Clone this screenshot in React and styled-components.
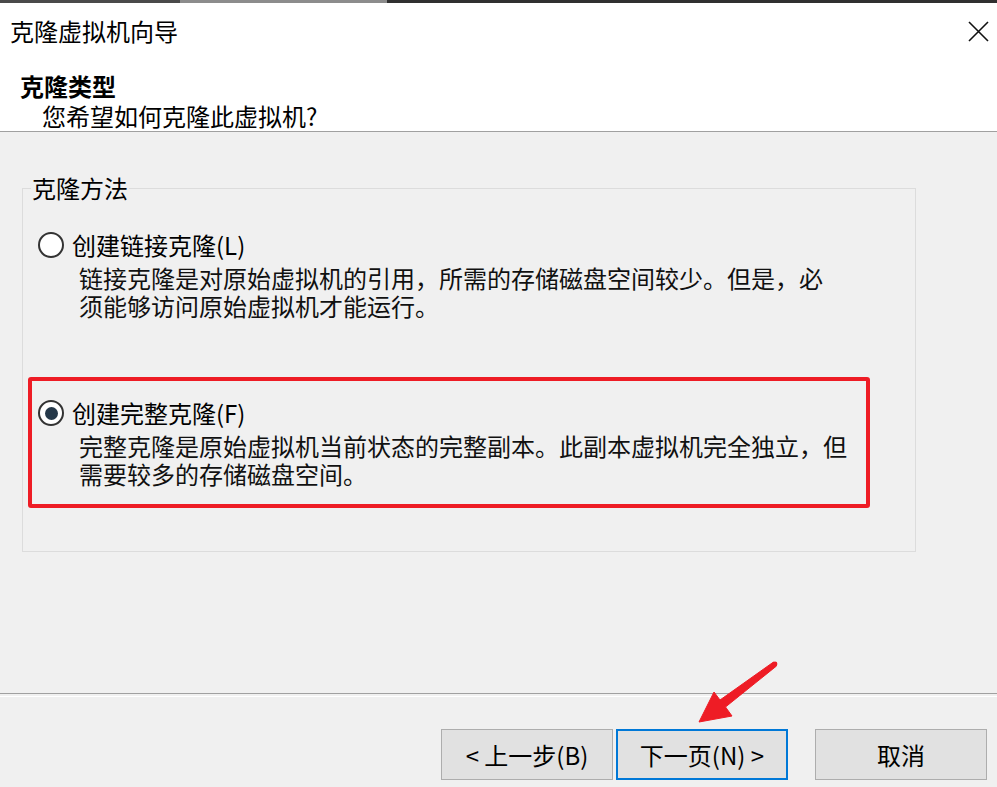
import React from 'react';
import styled, { createGlobalStyle } from 'styled-components';

const GlobalStyle = createGlobalStyle`
  html, body {
    margin: 0;
    padding: 0;
    background: #f0f0f0;
  }
  body {
    font-family: "Noto Sans CJK SC", "Noto Sans", sans-serif;
    color: #000;
  }
`;

const Window = styled.div`
  position: relative;
  width: 997px;
  height: 787px;
  overflow: hidden;
  background: #f0f0f0;
`;

const TopStrip = styled.div`
  height: 3px;
  background: linear-gradient(to right, #4a4a4a 0 180px, #8c8c8c 180px 387px, #303030 387px);
`;

const Header = styled.header`
  box-sizing: border-box;
  height: 129px;
  background: #fff;
  border-bottom: 1px solid #a0a0a0;
  overflow: hidden;
`;

const TitleRow = styled.div`
  display: flex;
  align-items: center;
  justify-content: space-between;
  margin-top: 14px;
  padding: 0 8px 0 10px;
  height: 28px;
  font-size: 24px;
  line-height: 28px;
`;

const CloseButton = styled.button`
  display: flex;
  align-items: center;
  justify-content: center;
  width: 21px;
  height: 21px;
  padding: 0;
  border: none;
  background: none;
  cursor: pointer;
`;

const Heading = styled.div`
  margin-top: 27px;
  padding-left: 20px;
  font-size: 24px;
  line-height: 28px;
  font-weight: 700;
`;

const SubHeading = styled.div`
  margin-top: 2px;
  padding-left: 42px;
  font-size: 24px;
  line-height: 28px;
`;

const Body = styled.main`
  box-sizing: border-box;
  height: 561px;
  padding: 42px 0 0 22px;
`;

const GroupBox = styled.fieldset`
  box-sizing: border-box;
  width: 894px;
  min-width: 0;
  margin: 0;
  padding: 29px 15px 63px 15px;
  border: 1px solid #dcdcdc;
`;

const Legend = styled.legend`
  margin-left: -7px;
  padding: 0 1px;
  font-size: 24px;
  line-height: 28px;
`;

const Option = styled.div`
  position: relative;
  margin-top: ${p => (p.$first ? 0 : 79)}px;

  ${p => p.$highlighted && `
    &::after {
      content: '';
      position: absolute;
      left: -10px;
      top: -22px;
      right: 30px;
      bottom: -20px;
      border: 4px solid #ee1c25;
      border-radius: 3px;
      pointer-events: none;
    }
  `}
`;

const RadioRow = styled.label`
  display: flex;
  align-items: center;
  gap: 8px;
  height: 28px;
  font-size: 24px;
  line-height: 28px;
  cursor: pointer;
`;

const RadioCircle = styled.span`
  box-sizing: border-box;
  display: flex;
  align-items: center;
  justify-content: center;
  width: 26px;
  height: 26px;
  border-radius: 50%;
  border: 2.5px solid #333;
  background: #fff;

  &::before {
    content: '';
    display: ${p => (p.$checked ? 'block' : 'none')};
    width: 13px;
    height: 13px;
    border-radius: 50%;
    background: #253849;
  }
`;

const Description = styled.div`
  margin-top: 5px;
  padding-left: 41px;
  font-size: 24px;
  line-height: 28px;
  color: #111;
`;

const Line = styled.div`
  white-space: nowrap;
`;

const Separator = styled.div`
  box-sizing: border-box;
  height: 4px;
  border-top: 1px solid #a0a0a0;
  border-bottom: 1px solid #fff;
`;

const Footer = styled.footer`
  display: flex;
  justify-content: flex-end;
  padding: 32px 10px 0 0;
`;

const Button = styled.button`
  box-sizing: border-box;
  width: 172px;
  height: 51px;
  margin-left: ${p => p.$gap || 0}px;
  padding: 0;
  background: #e1e1e1;
  border: ${p => (p.$primary ? '2px solid #0078d7' : '1px solid #adadad')};
  font-family: "Noto Sans CJK SC", "Noto Sans", sans-serif;
  font-size: 24px;
  line-height: 28px;
  color: #000;
  cursor: pointer;
`;

const Arrow = styled.svg`
  position: absolute;
  left: 690px;
  top: 655px;
  width: 95px;
  height: 75px;
  pointer-events: none;
`;

const options = [
  {
    id: 'linked',
    label: '创建链接克隆(L)',
    lines: ['链接克隆是对原始虚拟机的引用，所需的存储磁盘空间较少。但是，必', '须能够访问原始虚拟机才能运行。'],
    checked: false,
  },
  {
    id: 'full',
    label: '创建完整克隆(F)',
    lines: ['完整克隆是原始虚拟机当前状态的完整副本。此副本虚拟机完全独立，但', '需要较多的存储磁盘空间。'],
    checked: true,
  },
];

const App = () => {
  return (
    <Window>
      <GlobalStyle />
      <TopStrip />
      <Header>
        <TitleRow>
          <span>克隆虚拟机向导</span>
          <CloseButton aria-label="关闭">
            <svg width="21" height="21" viewBox="0 0 21 21">
              <path d="M1 1 L20 20 M20 1 L1 20" stroke="#111" strokeWidth="1.6" fill="none" />
            </svg>
          </CloseButton>
        </TitleRow>
        <Heading>克隆类型</Heading>
        <SubHeading>您希望如何克隆此虚拟机?</SubHeading>
      </Header>

      <Body>
        <GroupBox>
          <Legend>克隆方法</Legend>
          {options.map((opt, i) => (
            <Option key={opt.id} $first={i === 0} $highlighted={opt.checked}>
              <RadioRow>
                <RadioCircle $checked={opt.checked} />
                <span>{opt.label}</span>
              </RadioRow>
              <Description>
                {opt.lines.map(l => (
                  <Line key={l}>{l}</Line>
                ))}
              </Description>
            </Option>
          ))}
        </GroupBox>
      </Body>

      <Separator />

      <Footer>
        <Button>&lt; 上一步(B)</Button>
        <Button $primary $gap={3}>下一页(N) &gt;</Button>
        <Button $gap={27}>取消</Button>
      </Footer>

      <Arrow viewBox="690 655 95 75">
        <polygon
          points="699,722 714,692 720,700 773.5,662 776.5,666 725.5,707 732,716"
          fill="#ee1c25"
          stroke="#ee1c25"
          strokeWidth="1"
          strokeLinejoin="round"
        />
        <circle cx="775" cy="664" r="2.4" fill="#ee1c25" />
      </Arrow>
    </Window>
  );
};

export default App;
